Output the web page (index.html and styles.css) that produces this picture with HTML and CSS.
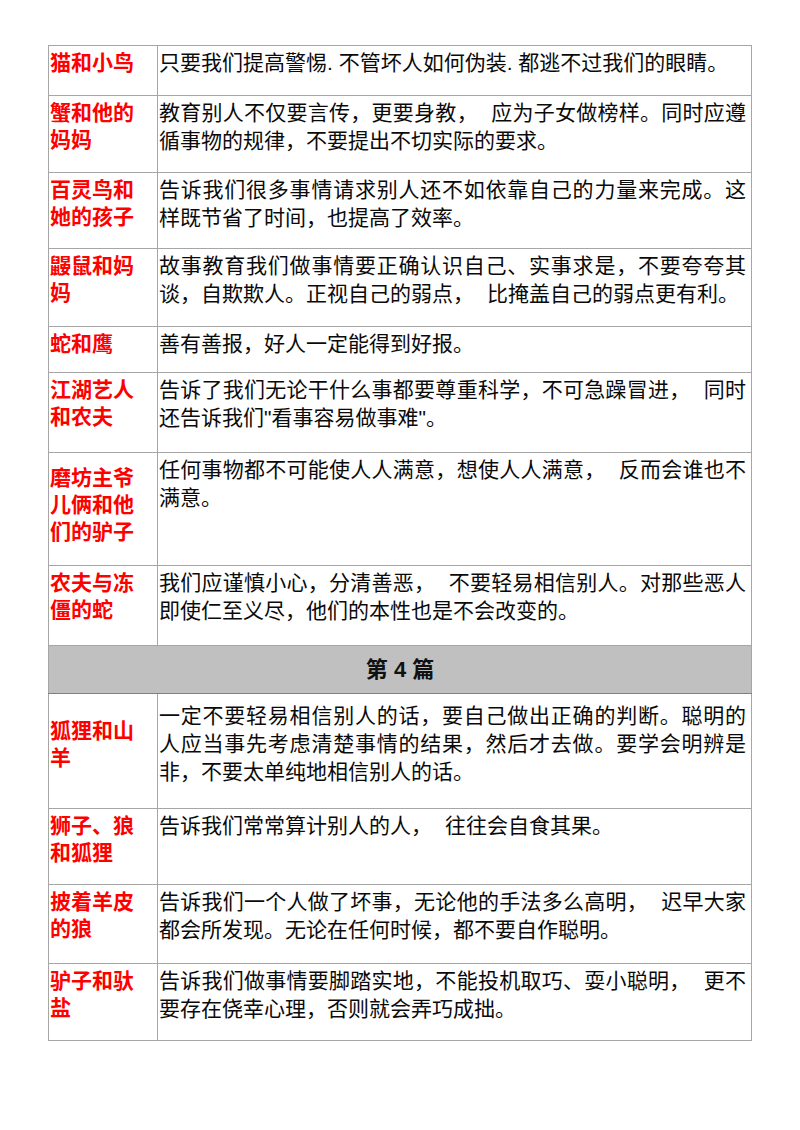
FILE: index.html
```html
<!DOCTYPE html>
<html lang="zh-CN">
<head>
<meta charset="utf-8">
<title>寓言道理</title>
<link rel="stylesheet" href="styles.css">
</head>
<body>
<div class="page">
<table class="fables">
<colgroup><col class="c-name"><col class="c-moral"></colgroup>
<tbody>
<tr class="h50"><td class="name">猫和小鸟</td><td class="moral">只要我们提高警惕. 不管坏人如何伪装. 都逃不过我们的眼睛。</td></tr>
<tr class="h77"><td class="name">蟹和他的妈妈</td><td class="moral">教育别人不仅要言传，更要身教，<span class="gap"></span>应为子女做榜样。同时应遵循事物的规律，不要提出不切实际的要求。</td></tr>
<tr class="h76"><td class="name">百灵鸟和她的孩子</td><td class="moral">告诉我们很多事情请求别人还不如依靠自己的力量来完成。这样既节省了时间，也提高了效率。</td></tr>
<tr class="h78"><td class="name">鼹鼠和妈妈</td><td class="moral">故事教育我们做事情要正确认识自己、实事求是，不要夸夸其谈，自欺欺人。正视自己的弱点，<span class="gap"></span>比掩盖自己的弱点更有利。</td></tr>
<tr class="h46"><td class="name">蛇和鹰</td><td class="moral">善有善报，好人一定能得到好报。</td></tr>
<tr class="h80"><td class="name">江湖艺人和农夫</td><td class="moral">告诉了我们无论干什么事都要尊重科学，不可急躁冒进，<span class="gap"></span>同时还告诉我们"看事容易做事难"。</td></tr>
<tr class="h113"><td class="name low">磨坊主爷儿俩和他们的驴子</td><td class="moral">任何事物都不可能使人人满意，想使人人满意，<span class="gap"></span>反而会谁也不满意。</td></tr>
<tr class="h80"><td class="name">农夫与冻僵的蛇</td><td class="moral">我们应谨慎小心，分清善恶，<span class="gap"></span>不要轻易相信别人。对那些恶人即使仁至义尽，他们的本性也是不会改变的。</td></tr>
<tr class="h48 section"><td colspan="2">第 4 篇</td></tr>
<tr class="h115"><td class="name lower">狐狸和山羊</td><td class="moral down">一定不要轻易相信别人的话，要自己做出正确的判断。聪明的人应当事先考虑清楚事情的结果，然后才去做。要学会明辨是非，不要太单纯地相信别人的话。</td></tr>
<tr class="h76"><td class="name">狮子、狼和狐狸</td><td class="moral">告诉我们常常算计别人的人，<span class="gap"></span>往往会自食其果。</td></tr>
<tr class="h79"><td class="name">披着羊皮的狼</td><td class="moral">告诉我们一个人做了坏事，无论他的手法多么高明，<span class="gap"></span>迟早大家都会所发现。无论在任何时候，都不要自作聪明。</td></tr>
<tr class="h77"><td class="name">驴子和驮盐</td><td class="moral">告诉我们做事情要脚踏实地，不能投机取巧、耍小聪明，<span class="gap"></span>更不要存在侥幸心理，否则就会弄巧成拙。</td></tr>
</tbody>
</table>
</div>
</body>
</html>
```

FILE: styles.css
```css
html, body {
  margin: 0;
  padding: 0;
  background: #ffffff;
}

.page {
  padding: 45px 0 0 48px;
}

.fables {
  border-collapse: collapse;
  width: 703px;
  table-layout: fixed;
  font-family: "Liberation Sans", "Noto Sans CJK SC", sans-serif;
  font-size: 21px;
  color: #0a0a0a;
}

.c-name { width: 109px; }
.c-moral { width: 594px; }

.fables td {
  border: 1px solid #a6a6a6;
  vertical-align: top;
  padding: 3px 5px 0 1px;
  line-height: 28px;
  text-align: justify;
  word-break: break-all;
}

.fables td.name {
  color: #ff0000;
  font-weight: bold;
  line-height: 27px;
  padding-left: 1px;
  padding-right: 4px;
  text-align: left;
}

.fables td.name.low { padding-top: 11px; }
.fables td.name.lower { padding-top: 23px; }
.fables td.moral.down { padding-top: 8px; }

.gap {
  display: inline-block;
  width: 13px;
}

.section td {
  background: #c0c0c0;
  border-top: 1px solid #7f7f7f;
  border-bottom: 1px solid #7f7f7f;
  text-align: center;
  vertical-align: middle;
  font-weight: bold;
  font-size: 22px;
  color: #111111;
  padding: 0;
}

.h46 { height: 46px; }
.h48 { height: 48px; }
.h50 { height: 50px; }
.h76 { height: 76px; }
.h77 { height: 77px; }
.h78 { height: 78px; }
.h79 { height: 79px; }
.h80 { height: 80px; }
.h113 { height: 113px; }
.h115 { height: 115px; }
```
